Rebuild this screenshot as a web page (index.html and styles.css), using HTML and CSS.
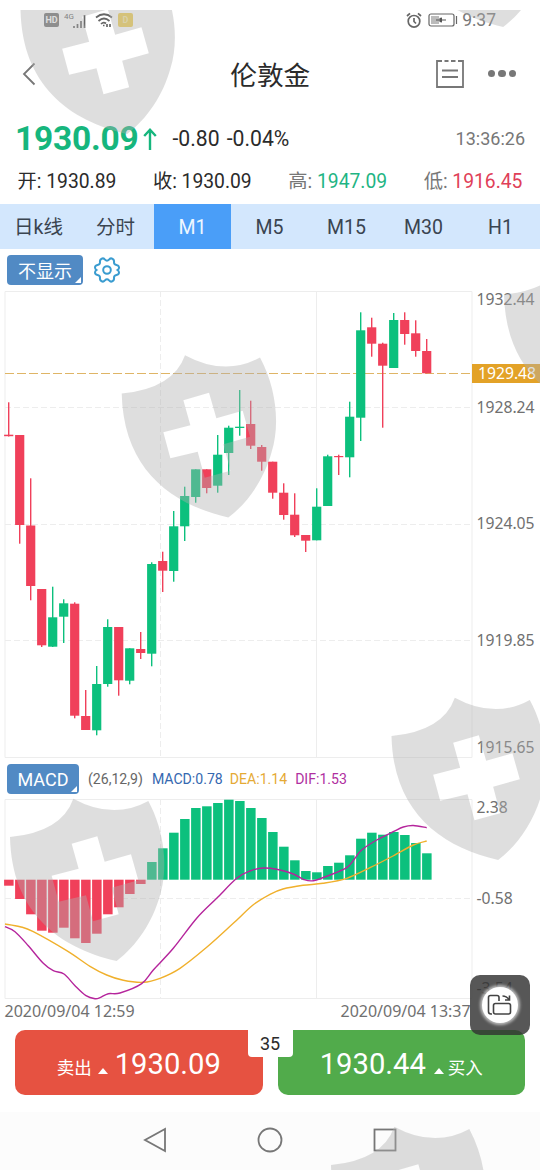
FILE: index.html
```html
<!DOCTYPE html>
<html lang="zh-CN">
<head>
    <meta charset="UTF-8">
    <meta name="viewport" content="width=device-width, initial-scale=1.0">
    <title>伦敦金</title>
    <link rel="stylesheet" href="styles.css">
</head>
<body>
    <div class="app">
        <header class="status-bar">
            <div class="status-left">
                <span class="hd">HD</span>
                <svg class="signal" width="24" height="17" viewBox="0 0 24 17">
                    <text x="0" y="7" class="net-type">4G</text>
                    <path d="M10 16v-2M13.5 16v-4M17 16V9M20.5 16V3" />
                </svg>
                <svg class="wifi" width="18" height="15" viewBox="0 0 18 15">
                    <path d="M1 4.5Q9-2 17 4.5M3.5 8Q9 3 14.500 8M6 11Q8.500 8.500 11 10.500" />
                    <path d="M8 12.500h1.500M12 11v3M15 11v3" />
                </svg>
                <span class="app-badge">D</span>
            </div>
            <div class="status-right">
                <svg class="alarm" width="16" height="17" viewBox="0 0 16 17">
                    <circle cx="8" cy="9.300" r="5.800" />
                    <path d="M8 6v3.500l2 2M1 4l3-2.700M15 4l-3-2.700" />
                </svg>
                <svg class="battery" width="30" height="14" viewBox="0 0 30 14">
                    <rect x="1" y="1" width="25" height="12" rx="2" />
                    <path class="level" d="M3 3h8v8H3z" />
                    <path class="bolt" d="M8 6.500h3.500V5L14 4.500V6.500h4v1h-4v2L11.500 9V7.500H8z" />
                    <path d="M28.500 3v8" />
                </svg>
                <span>9:37</span>
            </div>
        </header>

        <div class="title-bar">
            <svg class="back" width="14" height="24" viewBox="0 0 14 24"><path d="M12.500 1.500L2 12l10.500 10.500" /></svg>
            <h1>伦敦金</h1>
            <div class="title-actions">
                <svg width="28" height="28" viewBox="0 0 28 28">
                    <path d="M6 1H1v26h26V1h-5M8.500 1h4M15 1h4.500M6 10.500h16M6 17h16" />
                </svg>
                <div class="dots"><i></i><i></i><i></i></div>
            </div>
        </div>

        <section class="quote">
            <div class="quote-main">
                <strong class="price">1930.09</strong>
                <svg class="arrow" width="14" height="22" viewBox="0 0 14 22"><path d="M7 22V2M1.200 8L7 1.800 12.800 8" /></svg>
                <span class="change">-0.80</span>
                <span class="change">-0.04%</span>
                <span class="time">13:36:26</span>
            </div>
            <div class="quote-row">
                <span>开: 1930.89</span>
                <span>收: 1930.09</span>
                <span class="muted">高: <b class="up">1947.09</b></span>
                <span class="muted">低: <b class="down">1916.45</b></span>
            </div>
        </section>

        <nav class="tabs">
            <a>日k线</a>
            <a>分时</a>
            <a class="active">M1</a>
            <a>M5</a>
            <a>M15</a>
            <a>M30</a>
            <a>H1</a>
        </nav>

        <div class="tools">
            <button class="picker">不显示</button>
            <svg class="gear" width="26" height="26" viewBox="0 0 26 26">
                <path d="M8.200 1.500Q10 1 11 2.700Q13 5 15 2.700Q16 1 17.800 1.500Q20.500 2.500 20 5.500Q20 7.500 22.500 8Q25.300 8.500 25 11Q25 12 23.500 13Q25 14 25 15.500Q25 17.500 22.500 18Q20 18.500 20 20.500Q20.500 23.500 17.800 24.500Q16 25 15 23.300Q13 21 11 23.300Q10 25 8.200 24.500Q5.500 23.500 6 20.500Q6 18.500 3.500 18Q1 17.500 1 15.500Q1 14 2.500 13Q1 12 1 10.500Q1 8.500 3.500 8Q6 7.500 6 5.500Q5.500 2.500 8.200 1.500Z" />
                <circle cx="13" cy="13" r="3.800" />
            </svg>
        </div>

        <svg id="kline" class="chart" width="540" height="468" viewBox="0 291 540 468">
            <path class="grid" d="M5 291.500H472V757.500H5ZM316.500 291V757" />
            <path class="grid dashed" d="M160.500 291V757M5 407.500H472M5 524.500H472M5 640.500H472" />
            <path class="now-line" d="M5 373.500H472" />
            <g class="series"></g>
            <rect class="now-tag" x="472" y="364" width="68" height="19" />
            <text class="now-text" x="478" y="379">1929.48</text>
            <text x="476.500" y="304.500">1932.44</text>
            <text x="476.500" y="412.500">1928.24</text>
            <text x="476.500" y="529">1924.05</text>
            <text x="476.500" y="645.500">1919.85</text>
            <text x="476.500" y="753">1915.65</text>
        </svg>

        <div class="indicator">
            <button class="picker">MACD</button>
            <span>(26,12,9)</span>
            <span class="macd">MACD:0.78</span>
            <span class="dea">DEA:1.14</span>
            <span class="dif">DIF:1.53</span>
        </div>

        <svg id="macd" class="chart" width="540" height="223" viewBox="0 799 540 223">
            <path class="grid" d="M5 799.500H472V998.500H5ZM316.500 799V998" />
            <path class="grid dashed" d="M160.500 799V998M5 898.500H472" />
            <g class="series"></g>
            <text x="476.500" y="813">2.38</text>
            <text x="476.500" y="904">-0.58</text>
            <text x="476.500" y="993.500">-3.54</text>
            <text class="date" x="4.500" y="1016.500">2020/09/04 12:59</text>
            <text class="date" x="340.500" y="1016.500">2020/09/04 13:37</text>
        </svg>

        <footer class="trade">
            <button class="sell"><span>卖出</span><i></i><b>1930.09</b></button>
            <button class="buy"><b>1930.44</b><i></i><span>买入</span></button>
            <span class="spread">35</span>
        </footer>

        <div class="system-nav">
            <svg width="24" height="26" viewBox="0 0 24 26"><path d="M22 2v22L2 13z" /></svg>
            <svg width="26" height="26" viewBox="0 0 26 26"><circle cx="13" cy="13" r="11.500" /></svg>
            <svg width="24" height="26" viewBox="0 0 24 26"><rect x="1.500" y="2.500" width="21" height="21" /></svg>
        </div>

        <div class="rotate">
            <div class="rotate-inner">
                <svg width="26" height="22" viewBox="0 0 26 22">
                    <path d="M5 20H4q-2.500 0-2.500-2.500V3.500Q1.500 1.500 3.500 1.500H10q2 0 2 2V7" />
                    <rect x="6.500" y="9.500" width="17" height="10.500" rx="2" />
                    <path d="M15.500 2q4 0 6.500 3.500M22.500 1.500V6h-4.500" />
                </svg>
            </div>
        </div>

        <svg class="watermark" width="540" height="1170" viewBox="0 0 540 1170">
            <defs>
                <path id="shield" fill-rule="evenodd" transform="scale(.3333)" d="M0 0Q155-15 190-115Q310-50 415-108C465-15 475 95 450 175C428 255 380 327 320 372C145 332 5 225 0 0ZM185 20L262-2L284 74L363 52L385 130L305 152L326 232L249 253L228 175L146 194L125 116L206 95Z" />
                <clipPath id="screen"><path d="M0 10H540V1170H0z" /></clipPath>
            </defs>
            <g clip-path="url(#screen)">
                <use href="#shield" x="20.500" y="10" />
                <use href="#shield" x="396.500" y="-97" />
                <use href="#shield" x="121.700" y="393.500" />
                <use href="#shield" x="504" y="294.500" />
                <use href="#shield" x="391.500" y="736" />
                <use href="#shield" x="10" y="837" />
                <use href="#shield" x="331" y="1165" />
            </g>
        </svg>
    </div>
    <script src="chart.js"></script>
</body>
</html>
```

FILE: styles.css
```css
* {
    box-sizing: border-box;
}
body {
    margin: 0;
    background: #fff;
    color: #2b2b2b;
    font-family: Roboto, "Noto Sans CJK SC", sans-serif;
}
.app {
    position: relative;
    width: 540px;
    height: 1170px;
    overflow: hidden;
}
svg {
    display: block;
    fill: none;
    flex: none;
}
button {
    border: none;
    padding: 0;
    font-family: inherit;
    color: #fff;
}

/* Status bar */
.status-bar {
    display: flex;
    justify-content: space-between;
    height: 40px;
    padding: 0 44px;
    color: #777;
    font-size: 17.5px;
}
.status-left, .status-right {
    display: flex;
    align-items: center;
}
.status-bar svg {
    stroke: #666;
    stroke-width: 1.7;
}
.hd, .app-badge {
    width: 15px;
    height: 14px;
    border-radius: 2px;
    background: #777;
    color: #fff;
    font-size: 9px;
    font-weight: bold;
    line-height: 14px;
    text-align: center;
}
.app-badge {
    background: #f0cf55;
    color: #f7e9a8;
}
.signal {
    margin: 0 7px 0 5px;
}
.net-type {
    font-size: 8px;
    fill: #666;
    stroke: none;
}
.wifi {
    margin-right: 5px;
}
.alarm {
    margin-right: 6px;
}
.battery {
    margin-right: 4px;
}
.status-bar .battery {
    stroke-width: 1.2;
}
.battery .level {
    fill: #bbb;
    stroke: none;
}
.battery .bolt {
    fill: #555;
    stroke: none;
}

/* Title */
.title-bar {
    display: flex;
    align-items: center;
    justify-content: space-between;
    height: 67px;
    padding: 0 24px 0 22px;
}
.title-bar svg {
    stroke: #777;
    stroke-width: 1.8;
}
.title-bar h1 {
    margin: 0 0 0 69px;
    font-size: 26.7px;
    font-weight: normal;
}
.title-actions {
    display: flex;
    align-items: center;
    gap: 24px;
}
.dots {
    display: flex;
    gap: 3px;
}
.dots i {
    width: 7.5px;
    height: 7.5px;
    border-radius: 50%;
    background: #777;
}

/* Quote */
.quote {
    height: 97px;
}
.quote-main {
    display: flex;
    align-items: center;
    height: 63px;
    padding: 0 15px;
}
.price {
    width: 128px;
    color: #16b67d;
    font-size: 33.5px;
    letter-spacing: -0.2px;
}
.arrow {
    stroke: #16b67d;
    stroke-width: 2.4;
    margin-right: 15.5px;
}
.change {
    margin-right: 7px;
    font-size: 21.2px;
}
.time {
    margin-left: auto;
    font-size: 18px;
    color: #777;
}
.quote-row {
    display: flex;
    justify-content: space-between;
    padding: 0 17.5px;
    font-size: 19.3px;
    line-height: 24px;
}
.quote-row b {
    font-weight: normal;
}
.muted {
    color: #777;
}
.up {
    color: #1fb584;
}
.down {
    color: #e04058;
}

/* Period tabs */
.tabs {
    display: grid;
    grid-template-columns: repeat(7, 77px);
    grid-template-rows: 45px;
    height: 45px;
    background: #d3e7fd;
    color: #3a4450;
    font-size: 19.5px;
    line-height: 47px;
    text-align: center;
}
.tabs .active {
    background: #4a9ef8;
    color: #eef7ff;
}

.tools {
    display: flex;
    align-items: center;
    gap: 11px;
    height: 42px;
    padding-left: 7px;
}
.picker {
    position: relative;
    width: 76px;
    height: 30px;
    border-radius: 4px;
    background: #518ac4;
    font-size: 18px;
}
.picker::after {
    content: "";
    position: absolute;
    right: 2px;
    bottom: 2px;
    border-left: 6px solid transparent;
    border-bottom: 6px solid #fff;
}
.gear {
    stroke: #3a9cd0;
    stroke-width: 2;
}

/* Charts */
.chart {
    font-family: "Noto Sans", sans-serif;
    font-size: 15.7px;
}
.chart text {
    fill: #707070;
}
.chart .date {
    font-size: 16px;
}
.grid {
    stroke: #ededed;
}
.dashed {
    stroke-dasharray: 6 3;
}
.now-line {
    stroke: #dfb566;
    stroke-dasharray: 9 3;
}
.now-tag {
    fill: #e3a227;
}
.chart .now-text {
    fill: #fff;
}
.rise {
    fill: #0cc07d;
}
.fall {
    fill: #f0405a;
}
.line-dif {
    stroke: #b5259c;
    stroke-width: 1.4;
}
.line-dea {
    stroke: #f0b02c;
    stroke-width: 1.4;
}
.indicator {
    display: flex;
    align-items: center;
    height: 40px;
    padding-left: 7px;
    font-size: 14.1px;
    color: #666;
}
.indicator span {
    margin-left: 8px;
}
.indicator .picker {
    width: 72px;
    margin-right: 1px;
}
.indicator .macd {
    color: #3568b0;
    margin-left: 9px;
}
.indicator .dea {
    color: #e5aa35;
    margin-left: 7px;
}
.indicator .dif {
    color: #b02fa0;
}

/* Trade buttons */
.trade {
    position: relative;
    display: flex;
    gap: 15px;
    height: 90px;
    padding: 7.5px 15px 17.5px;
}
.trade button {
    flex: 1;
    display: flex;
    align-items: baseline;
    justify-content: center;
    padding-top: 16px;
    border-radius: 10px;
    font-size: 17.5px;
}
.sell {
    background: #e65241;
}
.buy {
    background: #51ab4b;
}
.trade b {
    font-size: 29.2px;
    font-weight: normal;
    line-height: 36px;
}
.trade i {
    margin: 0 7px 0 6px;
    border: solid transparent;
    border-width: 0 5px 6px;
    border-bottom-color: #fff;
}
.buy i {
    margin: 0 4px 0 8px;
}
.spread {
    position: absolute;
    top: 7px;
    left: 247.5px;
    width: 45px;
    height: 28px;
    border-radius: 0 0 4px 4px;
    background: #fff;
    font-size: 18px;
    line-height: 30px;
    text-align: center;
}

.system-nav {
    display: flex;
    justify-content: center;
    gap: 90px;
    height: 58px;
    padding-top: 15px;
    background: #fcfcfc;
}
.system-nav svg {
    stroke: #777;
    stroke-width: 1.8;
}

/* Floating rotate button */
.rotate {
    position: absolute;
    left: 470px;
    top: 975px;
    display: grid;
    place-items: center;
    width: 60px;
    height: 60px;
    border-radius: 10px;
    background: rgba(50, 50, 50, 0.82);
}
.rotate-inner {
    display: grid;
    place-items: center;
    width: 36px;
    height: 36px;
    border-radius: 50%;
    background: #fff;
    box-shadow: 0 0 3px 2px rgba(255, 255, 255, 0.6);
}
.rotate svg {
    stroke: #444;
    stroke-width: 1.6;
}
.watermark {
    position: absolute;
    left: 0;
    top: 0;
    pointer-events: none;
}
.watermark use {
    fill: rgba(174, 174, 174, 0.41);
}
```

FILE: chart.js
```js
const STEP = 11;
const FIRST = 8.7;
const ZERO = 879.7;

// direction, high, body top, body bottom, low
const candles = [
    [0, 402.3, 434.7, 436.2, 436.5], [0, 435, 435, 525, 543.7], [0, 478.3, 525.5, 586, 600.3],
    [0, 589, 589, 645.3, 647], [1, 586.7, 617.3, 646.7, 647], [1, 599.3, 603.3, 616.7, 643],
    [0, 602.3, 603.7, 715.7, 718.3], [0, 690, 716, 730, 730], [1, 666, 684, 730.3, 735.3],
    [1, 619.3, 627, 684, 686.7], [0, 627, 627, 680.3, 695.7], [1, 648.3, 648.3, 680.7, 684.3],
    [0, 632, 649, 653, 659], [1, 562.3, 564, 653.7, 666.3], [0, 551.7, 561, 570.7, 592],
    [1, 511, 526.3, 571, 581.7], [1, 486.7, 496, 526.3, 541], [1, 469.3, 469.3, 497, 502.7],
    [0, 469.3, 469.3, 488, 493.3], [1, 435, 454.7, 485.7, 492.7], [1, 425.7, 427.7, 453, 475],
    [1, 390, 426.7, 428, 435.7], [0, 400.7, 424, 445.7, 449], [0, 445, 447, 461.7, 470.7],
    [0, 461.7, 461.7, 492.7, 498.7], [0, 483.3, 492.7, 515, 519.7], [0, 493.3, 514.7, 535.3, 537],
    [0, 535, 535, 540.7, 552], [1, 488.3, 506.7, 540.3, 540.3], [1, 454.7, 456.3, 506, 506],
    [0, 454.7, 456, 457.2, 475], [1, 401.7, 416.7, 457.3, 477.3], [1, 312.3, 330.3, 417.7, 441],
    [0, 317.7, 327.3, 343.7, 356.7], [0, 342.7, 343.7, 365.7, 427.7], [1, 313, 320, 368, 368],
    [0, 312.3, 320, 334, 344.7], [0, 320.3, 333.3, 351, 356.7], [0, 339, 351, 373.3, 373.3]
];

const bars = [
    885.7, 899, 914.3, 930.7, 932.7, 927.7, 938.3, 943, 933.7, 914.3, 907.3, 894, 884,
    862, 848.3, 832.7, 819, 808, 806.3, 803, 799.7, 801, 808, 818, 832, 846.7,
    860.3, 871, 872.3, 866, 862.7, 855.3, 838.7, 832.7, 834.7, 832, 835, 843, 853.3
];

const dif = [
    [5, 926.7], [15, 931.7], [28.3, 945.7], [43.3, 963.3], [53.3, 970.7], [64, 974], [75, 985.7],
    [86, 995.7], [95, 998.7], [100, 997.7], [108.3, 993.7], [120, 993], [141.7, 983.7],
    [153.3, 970], [173.3, 948.3], [196.7, 918.3], [216.7, 898.3], [236.7, 878.3], [250, 871],
    [263.3, 868], [276.7, 869.3], [293.3, 874], [303.3, 879.3], [313.3, 880.7], [330, 875],
    [346.7, 867.7], [355, 858.3], [361.7, 850], [376.7, 840], [393.3, 831.7], [403.3, 827],
    [413.3, 825.5], [426.7, 827.7]
];

const dea = [
    [5, 924], [20, 926.7], [33.3, 931.7], [66.7, 950.7], [90, 966.3], [106.7, 975], [123.3, 980.3],
    [143.3, 982.3], [160, 978.3], [180, 968.3], [206.7, 947.3], [233.3, 923.3], [253, 905],
    [270, 894.3], [283, 889], [303, 885.3], [323, 883.3], [346.7, 878.3], [370, 867.7],
    [393, 856], [413.3, 845], [426.7, 841]
];

function rect(x, y, w, h, cls) {
    return `<rect class="${cls}" x="${x}" y="${y}" width="${w}" height="${h}"/>`;
}

function curve(points, cls) {
    let d = `M${points[0]}`;
    for (let i = 0; i < points.length - 1; i++) {
        const p0 = points[i - 1] || points[i];
        const p1 = points[i];
        const p2 = points[i + 1];
        const p3 = points[i + 2] || p2;
        d += `C${p1[0] + (p2[0] - p0[0]) / 6},${p1[1] + (p2[1] - p0[1]) / 6}`;
        d += ` ${p2[0] - (p3[0] - p1[0]) / 6},${p2[1] - (p3[1] - p1[1]) / 6} ${p2}`;
    }
    return `<path class="${cls}" d="${d}"/>`;
}

let html = '';
candles.forEach(([up, high, top, bottom, low], i) => {
    const x = FIRST + i * STEP;
    const cls = up ? 'rise' : 'fall';
    html += rect(x - 0.7, high, 1.4, low - high, cls);
    html += rect(x - 4.6, top, 9.2, bottom - top, cls);
});
document.querySelector('#kline .series').innerHTML = html;

html = '';
bars.forEach((y, i) => {
    const x = FIRST + i * STEP - 4.6;
    html += rect(x, Math.min(y, ZERO), 9.5, Math.abs(y - ZERO), y < ZERO ? 'rise' : 'fall');
});
html += curve(dea, 'line-dea') + curve(dif, 'line-dif');
document.querySelector('#macd .series').innerHTML = html;
```
